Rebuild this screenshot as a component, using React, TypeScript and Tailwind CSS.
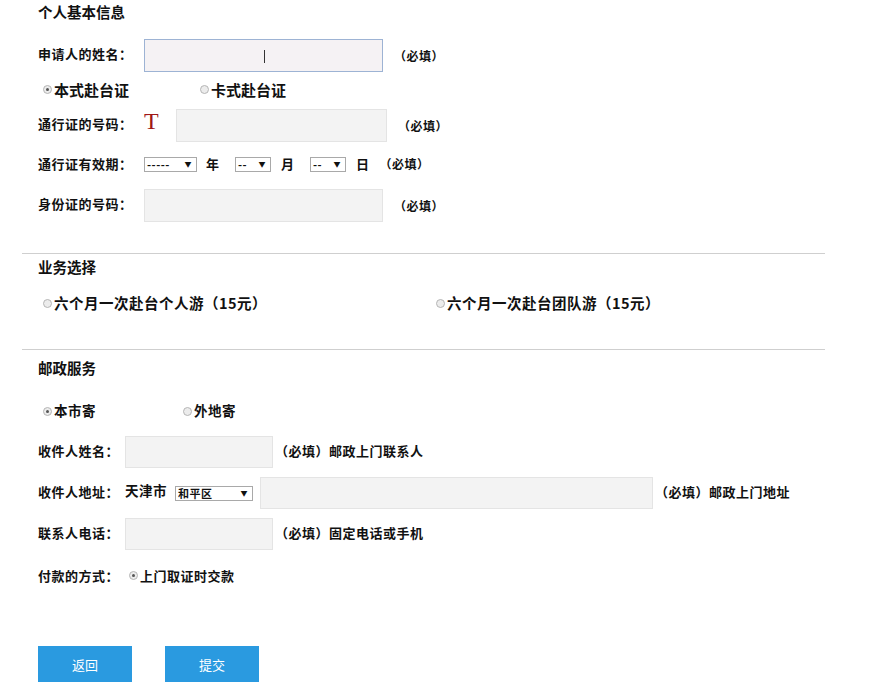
const FONT = { fontFamily: '"Noto Sans CJK SC", "Liberation Sans", sans-serif' };

function Radio({ checked }: { checked?: boolean }) {
  return (
    <span className="mr-[2px] inline-flex h-[9px] w-[9px] shrink-0 items-center justify-center rounded-full border border-[#b5b5b5] bg-[#ececec]">
      {checked && <span className="h-[3px] w-[3px] rounded-full bg-[#555]" />}
    </span>
  );
}

function FakeSelect({ text, width }: { text: string; width: string }) {
  return (
    <span className={`inline-flex h-[15px] items-center justify-between border border-[#a9a9a9] bg-white pl-[2px] pr-[4px] text-[11px] leading-none ${width}`}>
      <span className="font-bold">{text}</span>
      <span className="text-[7px]">▼</span>
    </span>
  );
}

function Field({ width, focused, cursor }: { width: string; focused?: boolean; cursor?: boolean }) {
  return (
    <div
      className={`relative h-full shrink-0 ${width} ${
        focused ? 'border border-[#9db3d4] bg-[#f5f2f4]' : 'border border-[#e4e4e4] bg-[#f3f3f3]'
      }`}
    >
      {cursor && <span className="absolute left-[119px] top-[10px] h-[13px] w-px bg-[#333]" />}
    </div>
  );
}

const Required = () => <span className="text-[12px] font-bold tracking-[0.5px]">（必填）</span>;

export default function App() {
  return (
    <div className="min-h-[694px] w-[887px] bg-white pl-[38px] pt-[4px] leading-none text-[#111]" style={FONT}>
      {/* 个人基本信息 */}
      <div className="flex h-[20px] items-center pb-[3px] text-[14.5px] font-bold">个人基本信息</div>

      <div className="mt-[15px] flex h-[33px] items-center">
        <span className="mb-[4px] w-[106px] text-[13px] font-bold tracking-[0.5px]">申请人的姓名：</span>
        <Field width="w-[239px]" focused cursor />
        <span className="mb-[4px] ml-[11px]"><Required /></span>
      </div>

      <div className="mt-[7px] flex h-[20px] items-center pl-[5px] text-[15px] font-bold">
        <label className="flex w-[157px] items-center">
          <Radio checked />
          本式赴台证
        </label>
        <label className="flex items-center">
          <Radio />
          卡式赴台证
        </label>
      </div>

      <div className="mt-[10px] flex h-[33px] items-center">
        <span className="mb-[4px] w-[106px] text-[13px] font-bold tracking-[0.5px]">通行证的号码：</span>
        <span
          className="-mt-[10px] w-[32px] text-[24px] leading-none text-[#a01818]"
          style={{ fontFamily: '"Liberation Serif", serif' }}
        >
          T
        </span>
        <Field width="w-[211px]" />
        <span className="mb-[4px] ml-[11px]"><Required /></span>
      </div>

      <div className="mt-[12px] flex h-[20px] items-center text-[13px] font-bold tracking-[0.5px]">
        <span className="mb-[2px] w-[106px]">通行证有效期：</span>
        <FakeSelect text="-----" width="w-[53px]" />
        <span className="mb-[2px] ml-[9px] w-[29px]">年</span>
        <FakeSelect text="--" width="w-[36px]" />
        <span className="mb-[2px] ml-[10px] w-[29px]">月</span>
        <FakeSelect text="--" width="w-[36px]" />
        <span className="mb-[2px] ml-[10px]">日</span>
        <span className="mb-[2px] ml-[10px]"><Required /></span>
      </div>

      <div className="mt-[15px] flex h-[33px] items-center">
        <span className="mb-[4px] w-[106px] text-[13px] font-bold tracking-[0.5px]">身份证的号码：</span>
        <Field width="w-[239px]" />
        <span className="mb-[4px] ml-[11px]"><Required /></span>
      </div>

      <hr className="-ml-[16px] mt-[31px] w-[803px] border-0 border-t border-[#cfcfcf]" />

      {/* 业务选择 */}
      <div className="mt-[5px] flex h-[20px] items-center pb-[3px] text-[14.5px] font-bold">业务选择</div>
      <div className="mt-[14px] flex h-[20px] items-center pl-[5px] text-[14.5px] font-bold tracking-[0.5px]">
        <label className="flex w-[393px] items-center">
          <Radio />
          六个月一次赴台个人游（15元）
        </label>
        <label className="flex items-center">
          <Radio />
          六个月一次赴台团队游（15元）
        </label>
      </div>

      <hr className="-ml-[16px] mt-[36px] w-[803px] border-0 border-t border-[#cfcfcf]" />

      {/* 邮政服务 */}
      <div className="mt-[10px] flex h-[20px] items-center pb-[3px] text-[14.5px] font-bold">邮政服务</div>
      <div className="mt-[21px] flex h-[20px] items-center pl-[5px] text-[13.5px] font-bold tracking-[0.5px]">
        <label className="flex w-[140px] items-center">
          <Radio checked />
          本市寄
        </label>
        <label className="flex items-center">
          <Radio />
          外地寄
        </label>
      </div>

      <div className="mt-[15px] flex h-[32px] items-center text-[13px] font-bold tracking-[0.5px]">
        <span className="mb-[4px] w-[87px]">收件人姓名：</span>
        <Field width="w-[148px]" />
        <span className="mb-[4px] ml-[2px]">（必填）邮政上门联系人</span>
      </div>

      <div className="mt-[9px] flex h-[32px] items-center text-[13px] font-bold tracking-[0.5px]">
        <span className="mb-[4px] w-[87px]">收件人地址：</span>
        <span className="mb-[4px] w-[50px] text-[13.5px]">天津市</span>
        <FakeSelect text="和平区" width="w-[78px]" />
        <span className="ml-[7px] h-full">
          <Field width="w-[393px]" />
        </span>
        <span className="mb-[4px] ml-[2px]">（必填）邮政上门地址</span>
      </div>

      <div className="mt-[9px] flex h-[32px] items-center text-[13px] font-bold tracking-[0.5px]">
        <span className="mb-[4px] w-[87px]">联系人电话：</span>
        <Field width="w-[148px]" />
        <span className="mb-[4px] ml-[2px]">（必填）固定电话或手机</span>
      </div>

      <div className="mt-[15px] flex h-[20px] items-center text-[13px] font-bold tracking-[0.5px]">
        <span className="w-[91px]">付款的方式：</span>
        <label className="flex items-center">
          <Radio checked />
          上门取证时交款
        </label>
      </div>

      <div className="mt-[61px] flex gap-[33px]">
        <button className="h-[36px] w-[94px] bg-[#2a9ae0] text-[13px] text-white">返回</button>
        <button className="h-[36px] w-[94px] bg-[#2a9ae0] text-[13px] text-white">提交</button>
      </div>
    </div>
  );
}
